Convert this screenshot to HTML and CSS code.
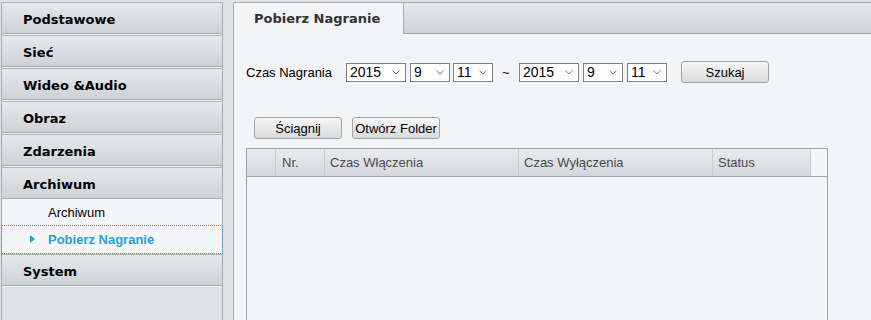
FILE: index.html
```html
<!DOCTYPE html>
<html lang="pl">
<head>
<meta charset="utf-8">
<title>Pobierz Nagranie</title>
<link rel="stylesheet" href="styles.css">
</head>
<body>
<div class="page">
  <nav class="sidebar">
    <div class="menu-item">Podstawowe</div>
    <div class="menu-item">Sieć</div>
    <div class="menu-item">Wideo &amp;Audio</div>
    <div class="menu-item">Obraz</div>
    <div class="menu-item">Zdarzenia</div>
    <div class="menu-item">Archiwum</div>
    <div class="submenu">
      <div class="sub-item">Archiwum</div>
      <div class="sub-item active"><span class="arrow"></span>Pobierz Nagranie</div>
    </div>
    <div class="menu-item">System</div>
  </nav>
  <main class="panel">
    <div class="tabs">
      <div class="tab active">Pobierz Nagranie</div>
      <div class="tab-fill"></div>
    </div>
    <div class="content">
      <div class="search-row">
        <span class="label">Czas Nagrania</span>
        <div class="select w60"><span>2015</span><svg class="chev" width="8" height="5" viewBox="0 0 8 5"><path d="M0.5 0.5 L4 4 L7.5 0.5" fill="none" stroke="#7a7a7a" stroke-width="1"/></svg></div>
        <div class="select w40 g4"><span>9</span><svg class="chev" width="8" height="5" viewBox="0 0 8 5"><path d="M0.5 0.5 L4 4 L7.5 0.5" fill="none" stroke="#7a7a7a" stroke-width="1"/></svg></div>
        <div class="select w40 g3"><span>11</span><svg class="chev" width="8" height="5" viewBox="0 0 8 5"><path d="M0.5 0.5 L4 4 L7.5 0.5" fill="none" stroke="#7a7a7a" stroke-width="1"/></svg></div>
        <span class="tilde">~</span>
        <div class="select w60"><span>2015</span><svg class="chev" width="8" height="5" viewBox="0 0 8 5"><path d="M0.5 0.5 L4 4 L7.5 0.5" fill="none" stroke="#7a7a7a" stroke-width="1"/></svg></div>
        <div class="select w40 g4"><span>9</span><svg class="chev" width="8" height="5" viewBox="0 0 8 5"><path d="M0.5 0.5 L4 4 L7.5 0.5" fill="none" stroke="#7a7a7a" stroke-width="1"/></svg></div>
        <div class="select w40 g4"><span>11</span><svg class="chev" width="8" height="5" viewBox="0 0 8 5"><path d="M0.5 0.5 L4 4 L7.5 0.5" fill="none" stroke="#7a7a7a" stroke-width="1"/></svg></div>
        <button class="btn search-btn">Szukaj</button>
      </div>
      <div class="action-row">
        <button class="btn">Ściągnij</button>
        <button class="btn">Otwórz Folder</button>
      </div>
      <div class="table">
        <div class="thead">
          <div class="th c-check"></div>
          <div class="th c-nr">Nr.</div>
          <div class="th c-time">Czas Włączenia</div>
          <div class="th c-time">Czas Wyłączenia</div>
          <div class="th c-status">Status</div>
          <div class="th c-scroll"></div>
        </div>
        <div class="tbody"></div>
      </div>
    </div>
  </main>
</div>
</body>
</html>
```
FILE: styles.css
```css
html, body {
  margin: 0;
  padding: 0;
  height: 100%;
  overflow: hidden;
}
body {
  background: #dfe2e5;
  font-family: "Liberation Sans", Arial, sans-serif;
  font-size: 13px;
  color: #000;
}
.page {
  display: flex;
  align-items: stretch;
  height: 100%;
  padding-top: 2px;
  box-sizing: border-box;
}
.sidebar {
  width: 222px;
  margin-left: 1px;
  box-sizing: border-box;
  border-left: 1px solid #a9adb1;
  border-right: 1px solid #a9adb1;
  background: #dfe2e5;
  display: flex;
  flex-direction: column;
}
.menu-item {
  height: 27px;
  padding-top: 3px;
  line-height: 27px;
  border-top: 1px solid #aeb2b6;
  border-bottom: 1px solid #a6aaae;
  margin-bottom: 1px;
  box-shadow: 0 1px 0 #f3f4f5;
  background: linear-gradient(#e6e9ec, #cdd2d7);
  padding-left: 21px;
  font-family: "DejaVu Sans", Verdana, sans-serif;
  font-weight: bold;
  font-size: 13px;
  color: #000;
}
.submenu {
  background: #f4f5f7;
}
.sub-item {
  height: 25px;
  line-height: 26px;
  padding-left: 46px;
  font-size: 13px;
  color: #000;
  position: relative;
}
.sub-item.active {
  height: 27px;
  line-height: 28px;
  margin: 0 -1px;
  padding-left: 46px;
  border: 1px dotted #2b9fd4;
  color: #2b9fd4;
  font-weight: bold;
}
.arrow {
  position: absolute;
  left: 28px;
  top: 9px;
  width: 0;
  height: 0;
  border-top: 4px solid transparent;
  border-bottom: 4px solid transparent;
  border-left: 5px solid #2b9fd4;
}
.panel {
  flex: 1;
  margin-left: 10px;
  border-left: 1px solid #a9adb1;
  border-top: 1px solid #a9adb1;
  background: #f3f4f6;
  display: flex;
  flex-direction: column;
}
.tabs {
  display: flex;
  height: 31px;
}
.tab.active {
  height: 31px;
  box-sizing: border-box;
  border-right: 1px solid #a9adb1;
  width: 170px;
  padding-left: 20px;
  line-height: 31px;
  font-family: "DejaVu Sans", Verdana, sans-serif;
  font-weight: bold;
  font-size: 13px;
  color: #333;
  background: #f3f4f6;
}
.tab-fill {
  flex: 1;
  height: 30px;
  border-bottom: 1px solid #a9adb1;
  background: linear-gradient(#e6e9ec, #ced3d8);
}
.content {
  padding: 0 12px;
}
.search-row {
  display: flex;
  align-items: center;
  height: 22px;
  margin-top: 27px;
}
.label {
  width: 100px;
  font-size: 13px;
}
.select {
  height: 19px;
  box-sizing: border-box;
  border: 1px solid #7f8184;
  background: #fff;
  display: flex;
  align-items: center;
  justify-content: space-between;
  padding: 0 5px 0 3px;
  font-size: 14px;
}
.w60 { width: 60px; }
.w40 { width: 40px; }
.g4 { margin-left: 4px; }
.g3 { margin-left: 3px; }
.chev { flex: none; }
.tilde {
  width: 7px;
  margin: 0 10px 0 9px;
  font-size: 13px;
}
.btn {
  height: 22px;
  width: 88px;
  box-sizing: border-box;
  border: 1px solid #a3a6a9;
  border-radius: 3px;
  background: linear-gradient(#f7f7f7, #d9dadb);
  font-family: "Liberation Sans", Arial, sans-serif;
  font-size: 13px;
  color: #000;
  padding: 0;
}
.search-btn {
  margin-left: 14px;
}
.action-row {
  display: flex;
  gap: 10px;
  margin-top: 34px;
  padding-left: 8px;
}
.table {
  margin-top: 9px;
  width: 582px;
  height: 220px;
  box-sizing: border-box;
  border: 1px solid #9fa3a7;
  background: #f4f5f7;
}
.thead {
  display: flex;
  height: 28px;
  box-sizing: border-box;
  border-bottom: 1px solid #a3a7ab;
}
.th {
  box-sizing: border-box;
  height: 27px;
  line-height: 27px;
  padding-left: 5px;
  border-right: 1px solid #c8ccd0;
  background: linear-gradient(#e9ebed, #d4d8dc);
  color: #4a4a4a;
  font-size: 13px;
}
.c-check { width: 29px; }
.c-nr { width: 49px; padding-left: 6px; }
.c-time { width: 194px; }
.c-status { width: 98px; }
.c-scroll {
  width: 16px;
  border-right: none;
  background: #f4f5f7;
}
```
